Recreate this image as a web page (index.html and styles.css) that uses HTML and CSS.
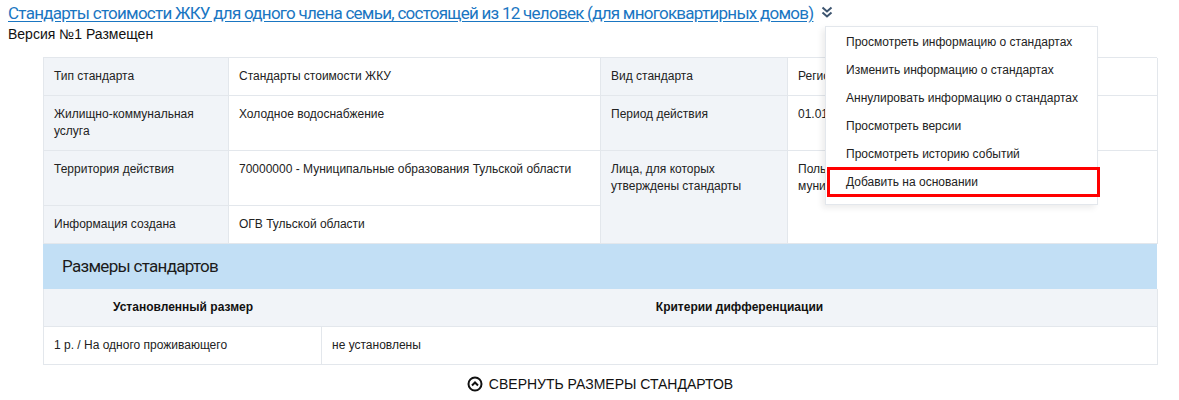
FILE: index.html
```html
<!DOCTYPE html>
<html lang="ru">
<head>
<meta charset="utf-8">
<link rel="stylesheet" href="styles.css">
</head>
<body>
<div class="head">
  <a class="title" href="#">Стандарты стоимости ЖКУ для одного члена семьи, состоящей из 12 человек (для многоквартирных домов)</a>
  <svg class="chev" width="12" height="12" viewBox="0 0 12 12"><path d="M1.5 1.5 L6 5.5 L10.5 1.5 M1.5 6.5 L6 10.5 L10.5 6.5" fill="none" stroke="#3d5570" stroke-width="2"/></svg>
  <div class="menu">
    <div class="item">Просмотреть информацию о стандартах</div>
    <div class="item">Изменить информацию о стандартах</div>
    <div class="item">Аннулировать информацию о стандартах</div>
    <div class="item">Просмотреть версии</div>
    <div class="item">Просмотреть историю событий</div>
    <div class="item hl">Добавить на основании</div>
  </div>
</div>
<div class="version">Версия №1 Размещен</div>

<div class="card">
  <div class="info">
    <div class="c lab">Тип стандарта</div>
    <div class="c">Стандарты стоимости ЖКУ</div>
    <div class="c lab">Вид стандарта</div>
    <div class="c">Региональный</div>

    <div class="c lab">Жилищно-коммунальная услуга</div>
    <div class="c">Холодное водоснабжение</div>
    <div class="c lab">Период действия</div>
    <div class="c">01.01.2020</div>

    <div class="c lab">Территория действия</div>
    <div class="c">70000000 - Муниципальные образования Тульской области</div>
    <div class="c lab span2">Лица, для которых утверждены стандарты</div>
    <div class="c span2"><div class="narrow">Пользователи жилых помещений муниципального жилищного фонда</div></div>

    <div class="c lab">Информация создана</div>
    <div class="c">ОГВ Тульской области</div>
  </div>
  <div class="sec">Размеры стандартов</div>
  <div class="sizes">
    <div class="th">Установленный размер</div>
    <div class="th">Критерии дифференциации</div>
    <div class="td">1 р. / На одного проживающего</div>
    <div class="td">не установлены</div>
  </div>
</div>
<div class="collapse">
  <svg width="16" height="16" viewBox="0 0 16 16"><circle cx="8" cy="8" r="6.5" fill="none" stroke="#111" stroke-width="2"/><path d="M5 9.5 L8 6.5 L11 9.5" fill="none" stroke="#111" stroke-width="2"/></svg>
  <span>СВЕРНУТЬ РАЗМЕРЫ СТАНДАРТОВ</span>
</div>
</body>
</html>
```

FILE: styles.css
```css
html, body { margin: 0; padding: 0; background: #fff; }
body {
  padding: 0 8px;
  font-family: "Liberation Sans", Arial, sans-serif;
  font-size: 12px;
  color: #222;
}
.head {
  position: relative;
  display: flex;
  align-items: center;
  gap: 8px;
  height: 26px;
}
.title {
  font-family: Roboto, "Liberation Sans", sans-serif;
  font-size: 17px;
  color: #1a76c2;
  text-decoration: underline;
  text-underline-offset: 2px;
  letter-spacing: -0.74px;
  white-space: nowrap;
}
.chev { margin-top: -2px; }
.menu {
  position: absolute;
  left: 817px;
  top: 26px;
  width: 271px;
  padding: 1px 0 8px;
  background: #fff;
  border: 1px solid #e3e7ec;
  box-shadow: -3px 3px 6px rgba(0,0,0,0.08);
  z-index: 5;
}
.item {
  height: 28px;
  line-height: 28px;
  padding-left: 20px;
  font-size: 12px;
  color: #222;
  white-space: nowrap;
}
.item.hl { outline: 3px solid #f00; outline-offset: -2px; margin: 0 -2px 0 2px; padding-left: 18px; }
.version { font-size: 14px; color: #111; height: 31px; line-height: 16px; }
.card {
  margin-left: 35px;
  width: 1114px;
}
.info {
  display: grid;
  grid-template-columns: 185px 372px 187px 370px;
  grid-template-rows: 38px 55px 55px 38px;
  border-top: 1px solid #e3e7ec;
  border-left: 1px solid #e3e7ec;
  box-sizing: border-box;
}
.c {
  border-right: 1px solid #e3e7ec;
  border-bottom: 1px solid #e3e7ec;
  padding: 10px 10px 0 10px;
  line-height: 17px;
  box-sizing: border-box;
  overflow: hidden;
}
.narrow { max-width: 240px; }
.lab { background: #f1f4f8; }
.span2 { grid-row: span 2; }
.sec {
  background: #c2dff5;
  height: 45px;
  line-height: 45px;
  padding-left: 19px;
  font-family: Roboto, "Liberation Sans", sans-serif;
  font-size: 17px;
  letter-spacing: -0.7px;
  color: #1b1b1b;
}
.sizes {
  display: grid;
  grid-template-columns: 278px 836px;
  grid-template-rows: 38px 38px;
  border-left: 1px solid #e3e7ec;
}
.th {
  background: #f1f4f8;
  font-weight: bold;
  text-align: center;
  line-height: 37px;
  color: #111;
  border-bottom: 1px solid #e3e7ec;
  border-right: 1px solid #e3e7ec;
}
.th:first-child { border-right: none; }
.td {
  line-height: 37px;
  padding-left: 10px;
  border-bottom: 1px solid #e3e7ec;
  border-right: 1px solid #e3e7ec;
}
.collapse {
  display: flex;
  justify-content: center;
  align-items: center;
  gap: 6px;
  margin-left: 35px;
  width: 1114px;
  height: 38px;
  font-size: 14px;
  color: #111;
}
```
